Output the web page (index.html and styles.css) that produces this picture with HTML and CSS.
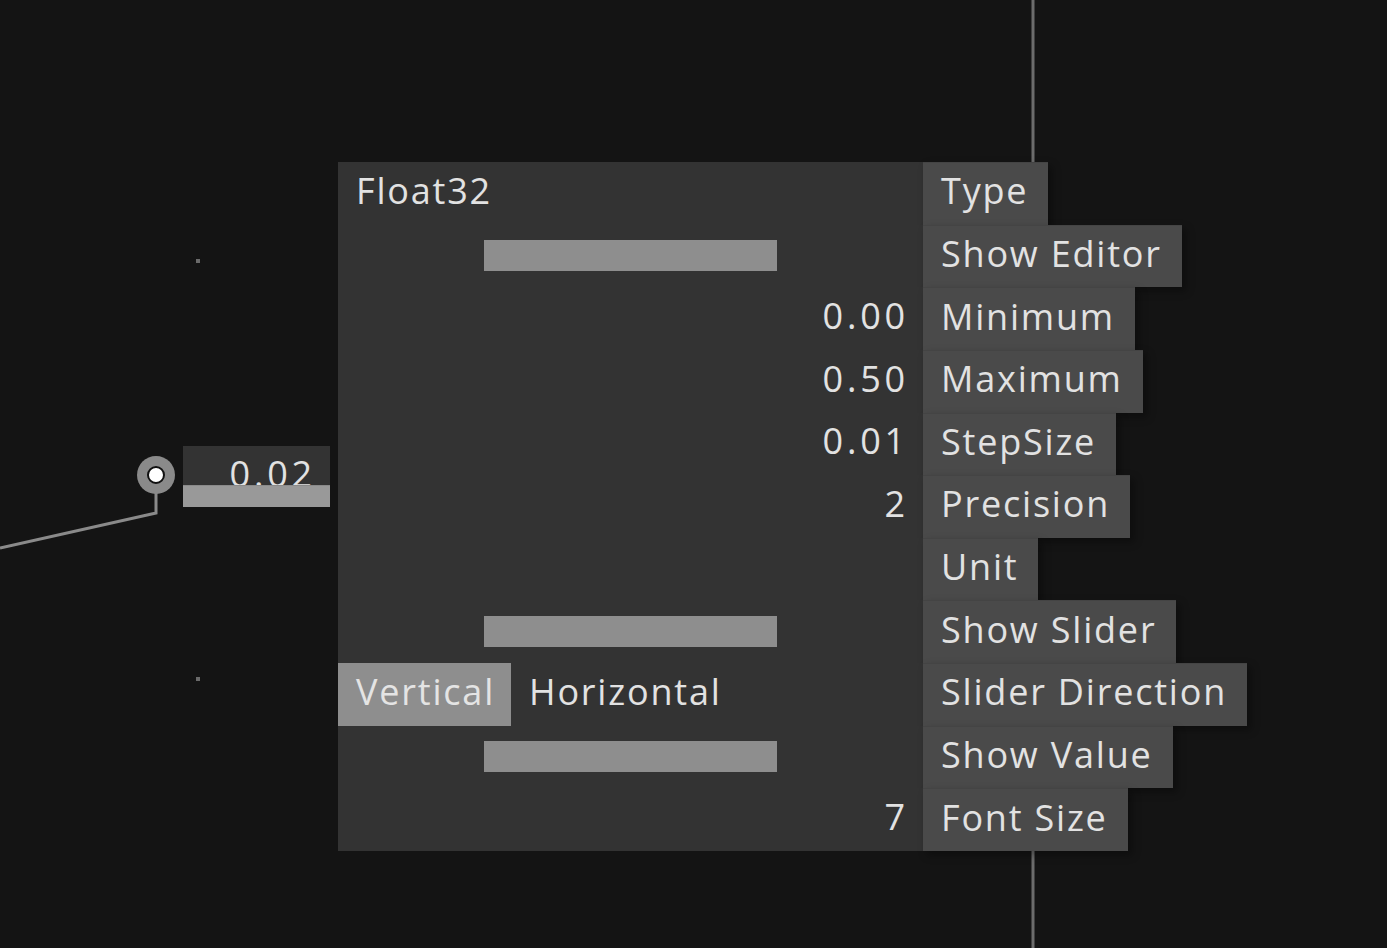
FILE: index.html
```html
<!DOCTYPE html>
<html lang="en">
  <head>
    <meta charset="UTF-8" />
    <title>Float32 node</title>
    <link rel="stylesheet" href="styles.css">
  </head>
  <body>
    <div class="canvas">
      <svg class="wires" width="1387" height="948">
        <line x1="1033" y1="0" x2="1033" y2="948" stroke="#6c6c6c" stroke-width="3" />
        <polyline points="156,478 156,513 0,548" fill="none" stroke="#8a8a8a" stroke-width="3" />
        <rect x="196" y="259" width="4" height="4" fill="#6a6a6a" />
        <rect x="196" y="677" width="4" height="4" fill="#6a6a6a" />
      </svg>

      <div class="pin">
        <div class="pin-dot"></div>
      </div>
      <div class="input-box">
        <span class="input-value">0.02</span>
        <div class="input-bar"></div>
      </div>

      <div class="node">
        <div class="row">
          <div class="cell title">Float32</div>
          <div class="label">Type</div>
        </div>
        <div class="row">
          <div class="cell"><div class="toggle"></div></div>
          <div class="label">Show Editor</div>
        </div>
        <div class="row">
          <div class="cell value">0.00</div>
          <div class="label">Minimum</div>
        </div>
        <div class="row">
          <div class="cell value">0.50</div>
          <div class="label">Maximum</div>
        </div>
        <div class="row">
          <div class="cell value">0.01</div>
          <div class="label">StepSize</div>
        </div>
        <div class="row">
          <div class="cell value">2</div>
          <div class="label">Precision</div>
        </div>
        <div class="row">
          <div class="cell value"></div>
          <div class="label">Unit</div>
        </div>
        <div class="row">
          <div class="cell"><div class="toggle"></div></div>
          <div class="label">Show Slider</div>
        </div>
        <div class="row">
          <div class="cell choice">
            <span class="option selected">Vertical</span>
            <span class="option">Horizontal</span>
          </div>
          <div class="label">Slider Direction</div>
        </div>
        <div class="row">
          <div class="cell"><div class="toggle"></div></div>
          <div class="label">Show Value</div>
        </div>
        <div class="row">
          <div class="cell value">7</div>
          <div class="label">Font Size</div>
        </div>
      </div>
    </div>
  </body>
</html>
```

FILE: styles.css
```css
body {
  margin: 0;
  background: #141414;
  font-family: "Open Sans", sans-serif;
  color: #e2e2e2;
  overflow: hidden;
}
.canvas {
  position: relative;
  width: 1387px;
  height: 948px;
}
.wires {
  position: absolute;
  left: 0;
  top: 0;
}
.pin {
  position: absolute;
  left: 137px;
  top: 456px;
  width: 38px;
  height: 38px;
  border-radius: 50%;
  background: #8a8a8a;
  display: flex;
  align-items: center;
  justify-content: center;
}
.pin-dot {
  width: 14px;
  height: 14px;
  border-radius: 50%;
  background: #fff;
  border: 2px solid #111;
}
.input-box {
  position: absolute;
  left: 183px;
  top: 446px;
  width: 147px;
  height: 61px;
  background: #333;
  overflow: hidden;
}
.input-value {
  position: absolute;
  right: 14px;
  top: 0;
  font-size: 36px;
  letter-spacing: 3.8px;
  line-height: 56px;
}
.input-bar {
  position: absolute;
  left: 0;
  right: 0;
  bottom: 0;
  height: 21px;
  background: #999;
  border-top: 1px solid #8a8a8a;
}
.node {
  position: absolute;
  left: 338px;
  top: 162px;
  display: grid;
  grid-auto-rows: 62.64px;
  font-size: 36px;
  letter-spacing: 1.8px;
}
.row {
  display: flex;
}
.cell {
  width: 585px;
  background: #333;
  display: flex;
  align-items: center;
  box-sizing: border-box;
  padding-bottom: 6px;
}
.title {
  padding-left: 18px;
}
.value {
  justify-content: flex-end;
  padding-right: 14px;
  letter-spacing: 3.8px;
}
.toggle {
  margin-top: 6px;
  margin-left: 146px;
  width: 293px;
  height: 31px;
  background: #8e8e8e;
}
.option {
  height: 100%;
  display: flex;
  align-items: center;
  padding: 0 16px 0 18px;
}
.option.selected {
  margin-bottom: -6px;
  padding-bottom: 6px;
  background: #8e8e8e;
  color: #e4e4e4;
}
.label {
  background: #4a4a4a;
  display: flex;
  align-items: center;
  padding: 0 20px 6px 18px;
  border-top: 1px solid #444;
  box-sizing: border-box;
  box-shadow: 4px 4px 8px rgba(0, 0, 0, 0.35);
}
```
